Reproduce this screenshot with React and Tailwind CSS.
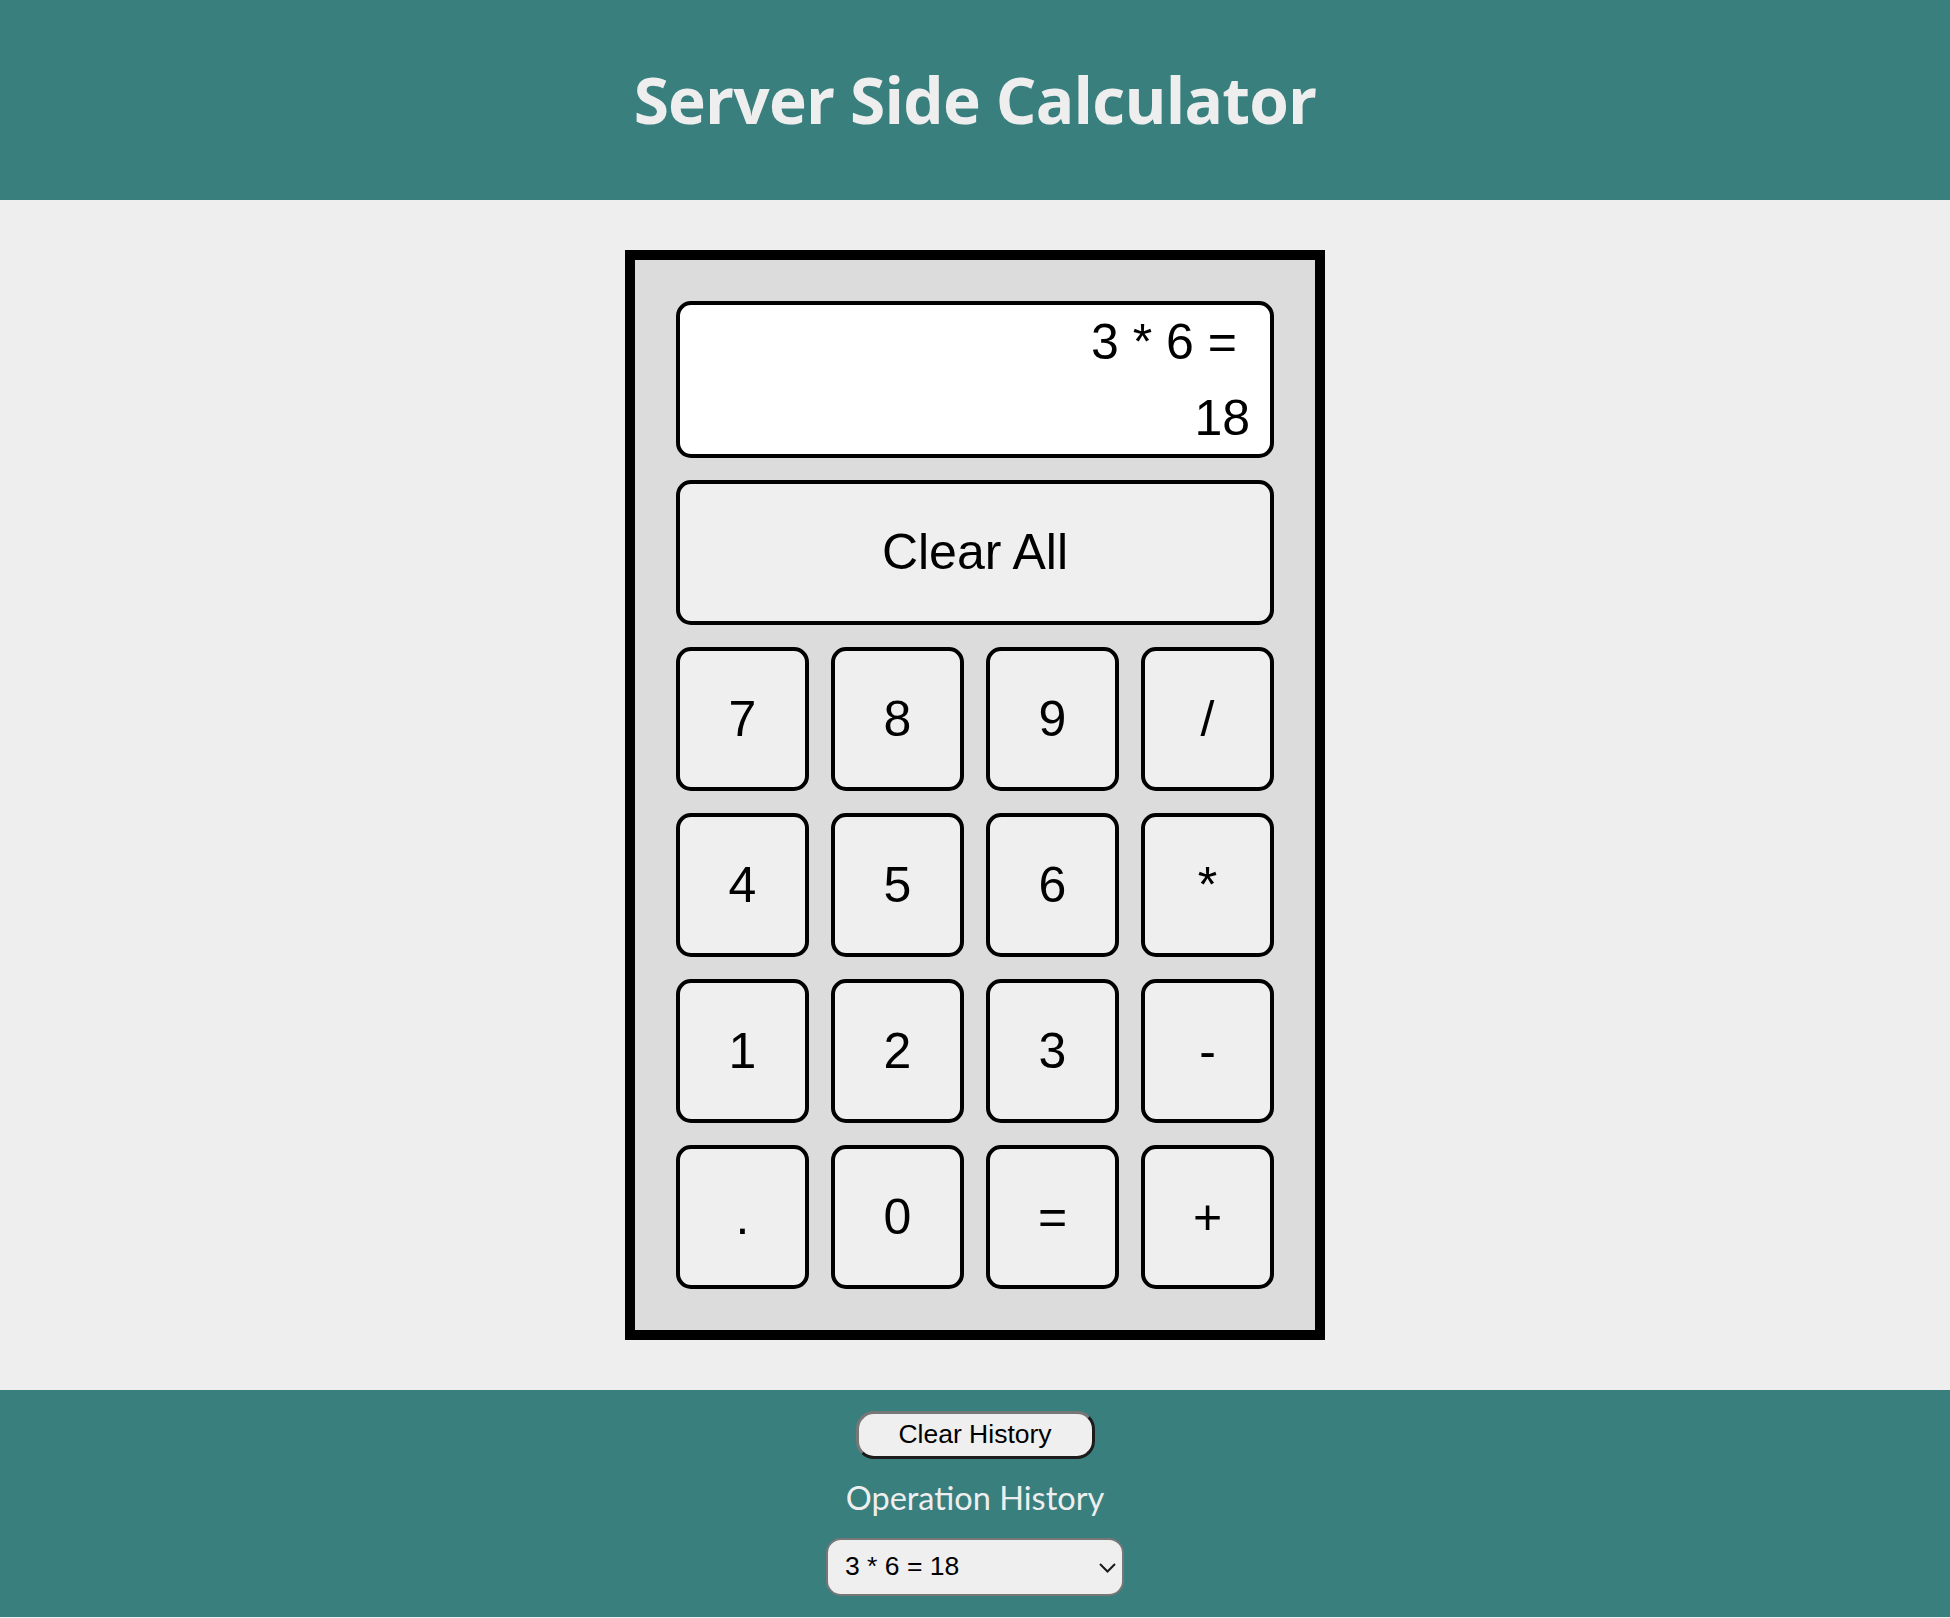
import React, { useState } from 'react';

const KEYS = ['7', '8', '9', '/', '4', '5', '6', '*', '1', '2', '3', '-', '.', '0', '=', '+'];

function Key({ label }) {
  return (
    <button className="h-[144px] rounded-[15px] border-4 border-black bg-[#efefef] text-[50px] text-black font-['Liberation_Sans',Arial,sans-serif] flex items-center justify-center">
      {label}
    </button>
  );
}

export default function App() {
  const [history] = useState(['3 * 6 = 18']);

  return (
    <div className="min-h-screen bg-[#eeeeee] flex flex-col">
      {/* header */}
      <header className="h-[200px] bg-[#387f7e] flex items-center justify-center">
        <h1 className="text-[64px] font-bold text-[#eeeeee] font-['Open_Sans',sans-serif] leading-none tracking-[-0.8px]">
          Server Side Calculator
        </h1>
      </header>

      {/* calculator */}
      <main className="flex justify-center py-[50px]">
        <div className="w-[700px] border-[10px] border-black bg-[#dcdcdc] p-[41px] flex flex-col gap-[22px] font-['Liberation_Sans',Arial,sans-serif]">
          <div className="h-[157px] rounded-[15px] border-4 border-black bg-white flex flex-col items-end pt-[9px] pr-[20px] text-[50px] text-black">
            <div className="leading-[57px] pr-[13px]">3 * 6 =</div>
            <div className="leading-[57px] mt-[19px]">18</div>
          </div>

          <button className="h-[145px] rounded-[15px] border-4 border-black bg-[#efefef] text-[50px] text-black flex items-center justify-center">
            Clear All
          </button>

          <div className="grid grid-cols-4 gap-[22px]">
            {KEYS.map((k) => (
              <Key key={k} label={k} />
            ))}
          </div>
        </div>
      </main>

      {/* history */}
      <footer className="bg-[#387f7e] flex flex-col items-center pt-[21px] pb-[21px]">
        <button className="w-[239px] h-[48px] rounded-[18px] border-[3px] border-t-[#777777] border-l-[#777777] border-b-[#1c1c1c] border-r-[#1c1c1c] bg-[#efefef] text-[26.5px] text-black font-['Liberation_Sans',Arial,sans-serif] flex items-center justify-center">
          Clear History
        </button>
        <div className="h-[79px] flex items-center">
          <h2 className="text-[32.5px] text-[#eeeeee] font-['Lato','Open_Sans',sans-serif] leading-none">Operation History</h2>
        </div>
        <div className="relative w-[298px] h-[58px]">
          <select className="appearance-none w-full h-full rounded-[15px] border-[2.5px] border-[#777777] bg-[#efefef] pl-[17px] text-[26.5px] text-black font-['Liberation_Sans',Arial,sans-serif] outline-none">
            {history.map((h) => (
              <option key={h}>{h}</option>
            ))}
          </select>
          <svg
            className="absolute right-[8px] top-[25px] pointer-events-none"
            width="17"
            height="10"
            viewBox="0 0 17 10"
            fill="none"
            stroke="#1a1a1a"
            strokeWidth="2"
          >
            <path d="M1 1l7.5 7.5L16 1" />
          </svg>
        </div>
      </footer>
    </div>
  );
}
